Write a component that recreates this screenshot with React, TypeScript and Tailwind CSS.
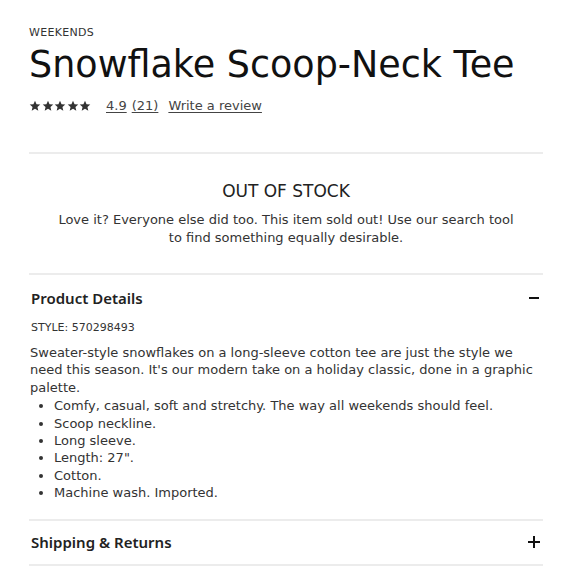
const Star = () => (
  <svg viewBox="0 0 24 24" className="h-[12px] w-[12px] fill-[#333]">
    <path d="M12 1.5l3.1 6.9 7.4.7-5.6 5 1.7 7.4L12 17.6l-6.6 3.9 1.7-7.4-5.6-5 7.4-.7z" />
  </svg>
);

export default function App() {
  const bullets = [
    "Comfy, casual, soft and stretchy. The way all weekends should feel.",
    "Scoop neckline.",
    "Long sleeve.",
    'Length: 27".',
    "Cotton.",
    "Machine wash. Imported.",
  ];

  return (
    <div
      className="w-[580px] h-[580px] overflow-hidden bg-white text-[#1f1f1f]"
      style={{ fontFamily: '"DejaVu Sans", "Noto Sans", sans-serif' }}
    >
      <div className="pl-[29px] pr-[37px] pt-[26px]">
        {/* header */}
        <div className="text-[11px] leading-[13px] tracking-[0.3px] text-[#333]">WEEKENDS</div>
        <h1 className="mt-[4px] text-[36.5px] leading-[44px] font-normal text-[#111]">
          Snowflake Scoop-Neck Tee
        </h1>
        <div className="mt-[10px] flex items-center text-[13px] leading-[18px] text-[#444]">
          <span className="flex gap-[0.5px]">
            <Star />
            <Star />
            <Star />
            <Star />
            <Star />
          </span>
          <a className="ml-[15px] underline underline-offset-2">4.9</a>
          <a className="ml-[5px] underline underline-offset-2">(21)</a>
          <a className="ml-[10px] underline underline-offset-2">Write a review</a>
        </div>

        <div className="mt-[37px] h-[2px] bg-[#ececec]" />

        {/* out of stock */}
        <div className="pt-[27px] pb-[26px] text-center">
          <div className="text-[17px] leading-[20px] text-[#222]">OUT OF STOCK</div>
          <p className="mt-[10px] px-[28px] text-[13px] leading-[18px] text-[#333]">
            Love it? Everyone else did too. This item sold out! Use our search tool to find
            something equally desirable.
          </p>
        </div>

        <div className="h-[2px] bg-[#ececec]" />

        {/* product details */}
        <div className="pt-[14px] pb-[17px]">
          <div className="flex items-center justify-between">
            <span
              className="pl-[2px] text-[15px] leading-[18px] font-semibold text-[#222]"
              style={{ fontFamily: '"Noto Sans", sans-serif' }}
            >
              Product Details
            </span>
            <span className="mr-[4px] block h-[2px] w-[10px] bg-[#111]" />
          </div>
          <div className="mt-[14px] pl-[2px] text-[11px] leading-[14px] text-[#333]">STYLE: 570298493</div>
          <p className="mt-[9px] pl-[1px] text-[13px] leading-[17.4px] text-[#333]">
            Sweater-style snowflakes on a long-sleeve cotton tee are just the style we need this
            season. It's our modern take on a holiday classic, done in a graphic palette.
          </p>
          <ul className="mt-[1px] list-disc pl-[25px] text-[13px] leading-[17.4px] text-[#333]">
            {bullets.map((b) => (
              <li key={b}>{b}</li>
            ))}
          </ul>
        </div>

        <div className="h-[2px] bg-[#ececec]" />

        <div className="flex items-center justify-between pt-[12px] pb-[13px]">
          <span
            className="pl-[2px] text-[15px] leading-[18px] font-semibold text-[#222]"
            style={{ fontFamily: '"Noto Sans", sans-serif' }}
          >
            Shipping &amp; Returns
          </span>
          <span className="relative mr-[3px] block h-[12px] w-[12px]">
            <span className="absolute left-0 top-[5px] h-[2px] w-[12px] bg-[#111]" />
            <span className="absolute left-[5px] top-0 h-[12px] w-[2px] bg-[#111]" />
          </span>
        </div>

        <div className="h-[2px] bg-[#ececec]" />
      </div>
    </div>
  );
}
